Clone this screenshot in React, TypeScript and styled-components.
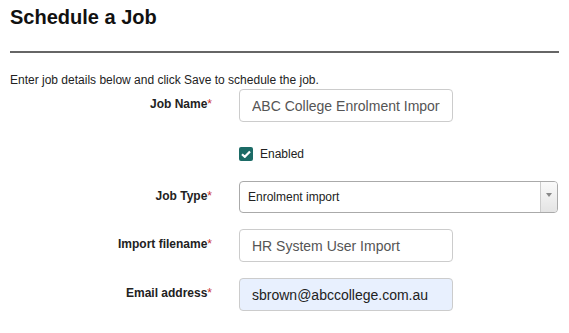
import React from 'react';
import styled, { createGlobalStyle } from 'styled-components';

const GlobalStyle = createGlobalStyle`
  html, body {
    margin: 0;
    padding: 0;
    background: #fff;
  }
  body {
    font-family: 'Liberation Sans', Arial, sans-serif;
    color: #222;
  }
`;

const Page = styled.div`
  padding: 0 10px;
  width: 549px;
`;

const Title = styled.h1`
  margin: 0;
  padding-top: 6px;
  font-size: 20px;
  line-height: 23px;
  font-weight: bold;
  color: #111;
`;

const Rule = styled.hr`
  margin: 22px 0 0;
  border: 0;
  border-top: 2px solid #666;
  height: 0;
`;

const Intro = styled.p`
  margin: 20px 0 1px;
  font-size: 12px;
  line-height: 15px;
`;

const FormRow = styled.div<{ $gap?: number }>`
  display: grid;
  grid-template-columns: 202px 1fr;
  column-gap: 27px;
  align-items: start;
  margin-bottom: ${(p) => p.$gap ?? 16}px;
`;

const Label = styled.label`
  text-align: right;
  font-size: 12px;
  line-height: 15px;
  font-weight: bold;
  padding-top: 8px;
  color: #222;
`;

const Req = styled.span`
  color: #c9302c;
  font-weight: normal;
`;

const TextInput = styled.input<{ $filled?: boolean }>`
  box-sizing: border-box;
  width: 214px;
  height: 33px;
  padding: 0 12px;
  border: 1px solid #ccc;
  border-radius: 4px;
  font-family: 'Liberation Sans', Arial, sans-serif;
  font-size: 14px;
  color: ${(p) => (p.$filled ? '#222' : '#555')};
  background: ${(p) => (p.$filled ? '#e8f0fe' : '#fff')};
  outline: none;
`;

const CheckRow = styled.div`
  display: flex;
  align-items: center;
  gap: 7px;
  margin: 25px 0 20px 229px;
  font-size: 12px;
  line-height: 14px;
  color: #222;
`;

const CheckBox = styled.span`
  width: 14px;
  height: 14px;
  border-radius: 2px;
  background: #1c6b66;
  display: flex;
  align-items: center;
  justify-content: center;
`;

const Select = styled.div`
  box-sizing: border-box;
  width: 319px;
  height: 32px;
  border: 1px solid #aaa;
  border-radius: 4px;
  display: flex;
  align-items: stretch;
  font-size: 12px;
  color: #222;
  overflow: hidden;
`;

const SelectValue = styled.div`
  flex: 1;
  display: flex;
  align-items: center;
  padding-left: 8px;
`;

const SelectArrow = styled.div`
  width: 17px;
  border-left: 1px solid #ccc;
  background: linear-gradient(#fafafa, #e4e4e4);
  display: flex;
  justify-content: center;
  padding-top: 11px;
  box-sizing: border-box;
`;

const Triangle = styled.span`
  width: 0;
  height: 0;
  border-left: 3px solid transparent;
  border-right: 3px solid transparent;
  border-top: 4px solid #888;
`;

export default function App() {
  return (
    <>
      <GlobalStyle />
      <Page>
        <Title>Schedule a Job</Title>
        <Rule />
        <Intro>Enter job details below and click Save to schedule the job.</Intro>

        <FormRow $gap={15}>
          <Label>
            Job Name<Req>*</Req>
          </Label>
          <TextInput defaultValue="ABC College Enrolment Import" />
        </FormRow>

        <CheckRow>
          <CheckBox>
            <svg width="10" height="8" viewBox="0 0 10 8">
              <path d="M1 4.2 L3.8 6.8 L9 1.4" fill="none" stroke="#fff" strokeWidth="2.2" />
            </svg>
          </CheckBox>
          Enabled
        </CheckRow>

        <FormRow>
          <Label>
            Job Type<Req>*</Req>
          </Label>
          <Select>
            <SelectValue>Enrolment import</SelectValue>
            <SelectArrow>
              <Triangle />
            </SelectArrow>
          </Select>
        </FormRow>

        <FormRow>
          <Label>
            Import filename<Req>*</Req>
          </Label>
          <TextInput defaultValue="HR System User Import" />
        </FormRow>

        <FormRow>
          <Label>
            Email address<Req>*</Req>
          </Label>
          <TextInput $filled defaultValue="sbrown@abccollege.com.au" />
        </FormRow>
      </Page>
    </>
  );
}
